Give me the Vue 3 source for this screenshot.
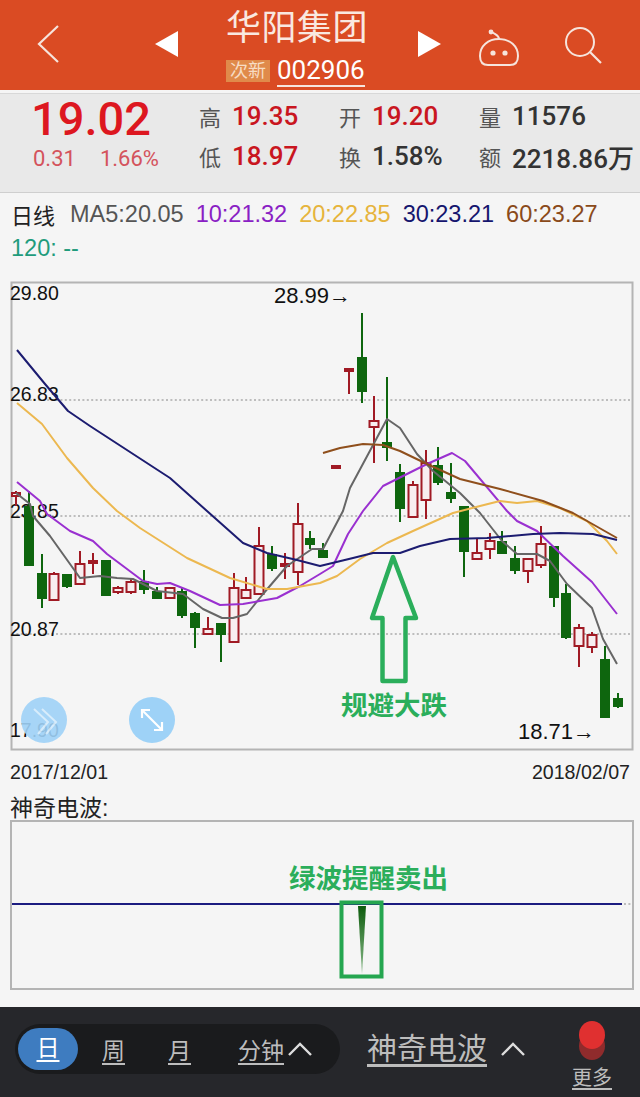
<script setup>
const quotes = [
  { label: "高", value: "19.35", up: true },
  { label: "开", value: "19.20", up: true },
  { label: "量", value: "11576", up: false },
  { label: "低", value: "18.97", up: true },
  { label: "换", value: "1.58%", up: false },
  { label: "额", value: "2218.86万", up: false },
];

const legend = [
  { text: "MA5:20.05", color: "#555" },
  { text: "10:21.32", color: "#8a1fc4" },
  { text: "20:22.85", color: "#e6b43c" },
  { text: "30:23.21", color: "#15156e" },
  { text: "60:23.27", color: "#8a4a1a" },
];

// x, wick top, wick bottom, body top, body bottom, up
const candles = [
  [16, 490, 505, 492, 495, 1],
  [29, 490, 565, 505, 565, 0],
  [42, 553, 607, 572, 598, 0],
  [54, 571, 600, 573, 599, 1],
  [67, 573, 587, 573, 586, 0],
  [80, 550, 583, 563, 583, 1],
  [93, 552, 573, 560, 562, 1],
  [106, 559, 595, 559, 595, 0],
  [118, 585, 593, 587, 591, 1],
  [131, 578, 593, 581, 591, 1],
  [144, 569, 593, 580, 589, 0],
  [157, 586, 598, 590, 598, 0],
  [170, 586, 598, 587, 597, 1],
  [182, 586, 617, 590, 615, 0],
  [195, 611, 647, 612, 627, 0],
  [208, 616, 633, 628, 633, 1],
  [221, 622, 661, 622, 634, 0],
  [234, 572, 641, 587, 641, 1],
  [246, 576, 598, 589, 597, 1],
  [259, 526, 594, 545, 593, 1],
  [272, 545, 570, 553, 568, 0],
  [285, 552, 578, 563, 565, 1],
  [298, 502, 584, 523, 571, 1],
  [310, 530, 548, 537, 544, 0],
  [323, 542, 557, 549, 557, 0],
  [336, 465, 467, 465, 467, 1],
  [349, 368, 393, 368, 370, 1],
  [362, 312, 402, 356, 391, 0],
  [374, 395, 462, 420, 426, 1],
  [387, 376, 460, 441, 447, 0],
  [400, 463, 521, 471, 508, 0],
  [413, 480, 516, 484, 516, 1],
  [426, 449, 518, 462, 499, 1],
  [438, 446, 484, 464, 482, 0],
  [451, 462, 502, 491, 498, 0],
  [464, 505, 576, 505, 551, 0],
  [477, 538, 558, 552, 558, 1],
  [490, 532, 558, 540, 548, 1],
  [502, 530, 553, 540, 553, 0],
  [515, 545, 573, 557, 570, 0],
  [528, 557, 582, 558, 570, 1],
  [541, 525, 567, 543, 564, 1],
  [554, 545, 606, 545, 597, 0],
  [566, 583, 638, 592, 637, 0],
  [579, 623, 666, 627, 645, 1],
  [592, 631, 652, 634, 646, 1],
  [605, 645, 717, 658, 717, 0],
  [618, 692, 707, 697, 706, 0],
];

const lines = [
  {
    color: "#666",
    points: "16,492 30,503 33,515 50,535 80,577 100,575 117,577 133,578 157,590 183,593 203,608 222,617 233,617 247,613 263,593 287,565 312,548 323,548 343,510 350,487 387,418 400,427 417,453 433,470 460,492 480,512 502,540 517,553 537,553 550,560 567,583 592,607 603,638 617,663",
  },
  {
    color: "#9a30d0",
    points: "17,481 40,500 47,513 70,530 93,540 107,553 143,580 157,583 170,582 190,590 220,604 243,603 277,597 300,585 320,573 333,565 348,533 363,510 383,485 427,463 452,452 465,460 507,510 517,520 537,530 563,555 592,581 617,613",
  },
  {
    color: "#ecb850",
    points: "17,402 42,423 67,457 93,487 117,510 140,527 187,557 230,577 267,588 287,588 320,582 337,575 360,558 387,542 413,530 453,512 480,505 500,500 517,502 537,500 560,507 587,520 607,540 617,553",
  },
  {
    color: "#1c1c70",
    points: "17,349 45,383 68,410 90,425 170,477 207,510 243,542 267,552 297,559 320,565 353,557 373,552 400,552 420,545 450,538 487,537 533,533 560,532 593,533 617,539",
  },
  {
    color: "#8f4f1c",
    points: "323,452 340,447 363,443 383,444 400,450 427,463 460,478 500,488 543,500 563,508 573,512 617,537",
  },
];

const priceLabels = [
  { text: "29.80", y: 299 },
  { text: "26.83", y: 400 },
  { text: "23.85", y: 517 },
  { text: "20.87", y: 635 },
];

const candleColor = (c) => (c[5] ? "#a01a24" : "#0e660e");
</script>

<template>
  <div class="page">
    <header class="topbar">
      <svg class="back" width="24" height="40" viewBox="0 0 24 40">
        <path d="M22 2 L3 20 L22 38" fill="none" stroke="#f6e4dc" stroke-width="2.2" />
      </svg>
      <svg class="prev" width="24" height="26" viewBox="0 0 24 26">
        <path d="M23 0 V26 L0 13 Z" fill="#fff" />
      </svg>
      <div class="stock">
        <div class="stock-name">华阳集团</div>
        <div class="stock-sub">
          <span class="stock-tag">次新</span>
          <span class="stock-code">002906</span>
        </div>
      </div>
      <svg class="next" width="24" height="26" viewBox="0 0 24 26">
        <path d="M1 0 V26 L24 13 Z" fill="#fff" />
      </svg>
      <svg class="robot" width="42" height="38" viewBox="0 0 42 38">
        <path d="M21 10 C10 10 2 17 2 27 C2 33 5 36 10 36 H32 C37 36 40 33 40 27 C40 17 32 10 21 10 Z" fill="none" stroke="#f6e4dc" stroke-width="2" />
        <path d="M21 10 C21 6 18 6 14 3" fill="none" stroke="#f6e4dc" stroke-width="2" />
        <circle cx="13" cy="3" r="2.4" fill="#f6e4dc" />
        <circle cx="15" cy="24" r="2.6" fill="#f6e4dc" />
        <circle cx="27" cy="24" r="2.6" fill="#f6e4dc" />
      </svg>
      <svg class="search" width="38" height="38" viewBox="0 0 38 38">
        <circle cx="16" cy="16" r="14" fill="none" stroke="#f6e4dc" stroke-width="2" />
        <path d="M26 26 L37 37" stroke="#f6e4dc" stroke-width="2.2" />
      </svg>
    </header>

    <section class="quote">
      <div class="price-block">
        <div class="price">19.02</div>
        <div class="change"><span>0.31</span><span>1.66%</span></div>
      </div>
      <div class="quote-grid">
        <div v-for="q in quotes" :key="q.label" class="quote-cell">
          <span class="quote-label">{{ q.label }}</span>
          <span class="quote-value" :class="{ up: q.up }">{{ q.value }}</span>
        </div>
      </div>
    </section>

    <section class="legend">
      <div class="legend-row">
        <span class="legend-title">日线</span>
        <span v-for="l in legend" :key="l.text" class="legend-item" :style="{ color: l.color }">{{ l.text }}</span>
      </div>
      <div class="legend-extra">120: --</div>
    </section>

    <svg class="chart" width="640" height="490" viewBox="0 270 640 490">
      <rect x="11.5" y="281.5" width="621" height="467" fill="none" stroke="#b4b4b4" stroke-width="2" />
      <g stroke="#aaa" stroke-width="1.5" stroke-dasharray="2 2.4">
        <line x1="12" y1="399" x2="632" y2="399" />
        <line x1="12" y1="515" x2="632" y2="515" />
        <line x1="12" y1="633" x2="632" y2="633" />
      </g>
      <g class="axis-text">
        <text v-for="p in priceLabels" :key="p.text" x="10" :y="p.y">{{ p.text }}</text>
        <text x="10" y="736">17.90</text>
        <text class="mark" x="274" y="302">28.99→</text>
        <text class="mark" x="518" y="738">18.71→</text>
      </g>
      <g v-for="c in candles" :key="c[0]">
        <line :x1="c[0]" :x2="c[0]" :y1="c[1]" :y2="c[2]" :stroke="candleColor(c)" stroke-width="2" />
        <rect
          v-if="c[5]"
          :x="c[4] - c[3] < 4 ? c[0] - 4 : c[0] - 4.5"
          :y="c[3]"
          :width="c[4] - c[3] < 4 ? 8 : 9"
          :height="c[4] - c[3]"
          fill="#f8eef0"
          :stroke="candleColor(c)"
          stroke-width="2"
        />
        <rect v-else :x="c[0] - 5" :y="c[3]" width="10" :height="c[4] - c[3]" :fill="candleColor(c)" />
      </g>
      <polyline v-for="l in lines" :key="l.color" :points="l.points" fill="none" :stroke="l.color" stroke-width="2" stroke-linejoin="round" />
      <path d="M393 556 L372 617 H382.5 V680 H405.5 V617 H416 Z" fill="none" stroke="#2bae5b" stroke-width="4.5" stroke-linejoin="round" />
      <text class="note" x="341" y="714">规避大跌</text>
      <circle cx="44" cy="719" r="23" fill="#9ed2f7" fill-opacity="0.9" />
      <path d="M34 708 L48 721 L38 733 M42 708 L56 721 L46 733" fill="none" stroke="#fff" stroke-opacity="0.55" stroke-width="2" />
      <circle cx="152" cy="719" r="23" fill="#9ed2f7" />
      <g fill="none" stroke="#fff" stroke-width="2.2">
        <path d="M142 709 L162 729" />
        <path d="M142 717 V709 H150" />
        <path d="M162 721 V729 H154" />
      </g>
    </svg>

    <div class="dates">
      <span>2017/12/01</span>
      <span>2018/02/07</span>
    </div>

    <div class="wave-title">神奇电波:</div>

    <svg class="wave" width="640" height="172" viewBox="0 824 640 172">
      <rect x="11" y="825" width="622" height="168" fill="none" stroke="#b4b4b4" stroke-width="2" />
      <line x1="12" y1="908" x2="622" y2="908" stroke="#1c1c80" stroke-width="2" />
      <line x1="624" y1="908" x2="632" y2="908" stroke="#aaa" stroke-width="1.5" stroke-dasharray="2 2.4" />
      <defs>
        <linearGradient id="spike" x1="0" y1="0" x2="0" y2="1">
          <stop offset="0" stop-color="#0b5a0b" />
          <stop offset="1" stop-color="#3a8a3a" stop-opacity="0.6" />
        </linearGradient>
      </defs>
      <path d="M358 910 H366 L362 978 Z" fill="url(#spike)" />
      <rect x="341.5" y="906.5" width="40" height="74" fill="none" stroke="#25a650" stroke-width="4" />
      <text class="note wave-note" x="289" y="892">绿波提醒卖出</text>
    </svg>

    <footer class="bottombar">
      <div class="periods">
        <span class="period active">日</span>
        <span class="period week">周</span>
        <span class="period month">月</span>
        <span class="period minute">分钟</span>
        <svg class="caret" width="24" height="14" viewBox="0 0 24 14">
          <path d="M1 13 L12 2 L23 13" fill="none" stroke="#ddd" stroke-width="2.4" />
        </svg>
      </div>
      <span class="indicator">神奇电波</span>
      <svg class="caret-large" width="24" height="14" viewBox="0 0 24 14">
        <path d="M1 13 L12 2 L23 13" fill="none" stroke="#ddd" stroke-width="2.4" />
      </svg>
      <div class="more">
        <div class="dot"></div>
        <span class="more-text">更多</span>
      </div>
      <div class="pager">
        <span class="pager-item"></span>
        <span class="pager-item current"></span>
      </div>
    </footer>
  </div>
</template>

<style>
html,
body {
  margin: 0;
  background: #f5f5f5;
}
</style>

<style scoped>
.page {
  width: 640px;
  height: 1097px;
  overflow: hidden;
  display: flex;
  flex-direction: column;
  background: #f5f5f5;
  font-family: "Roboto", "Noto Sans CJK SC", sans-serif;
}
.topbar {
  height: 90px;
  flex-shrink: 0;
  display: flex;
  align-items: center;
  padding-left: 36px;
  box-sizing: border-box;
  background: #da4b23;
}
.back {
  margin-right: 95px;
  margin-top: -2px;
}
.prev {
  margin-top: -2px;
}
.stock {
  width: 142px;
  margin-left: 47px;
  color: #f9e8e0;
}
.stock-name {
  font-size: 35px;
  line-height: 50px;
  letter-spacing: 0.5px;
  white-space: nowrap;
}
.stock-sub {
  display: flex;
  align-items: center;
  gap: 7px;
  height: 30px;
  margin-top: 2px;
}
.stock-tag {
  width: 44px;
  height: 22px;
  line-height: 22px;
  text-align: center;
  font-size: 18px;
  color: #f7dcc4;
  background: #e08a4a;
}
.stock-code {
  font-size: 26px;
  line-height: 30px;
  color: #fff;
  border-bottom: 2px solid #f6e4dc;
}
.next {
  margin-left: 49px;
  margin-top: -2px;
}
.robot {
  margin-left: 37px;
  margin-top: 6px;
}
.search {
  margin-left: 44px;
}
.quote {
  height: 100px;
  flex-shrink: 0;
  box-sizing: border-box;
  margin-top: 3px;
  display: flex;
  background: #e9e9e9;
  border-top: 1px solid #d8d8d8;
  border-bottom: 1px solid #cfcfcf;
  padding-left: 31px;
}
.price-block {
  width: 168px;
  flex-shrink: 0;
}
.price {
  font-size: 47px;
  font-weight: 500;
  line-height: 50px;
  margin-top: 0;
  color: #dd1720;
}
.change {
  display: flex;
  gap: 24px;
  margin-top: 1px;
  padding-left: 2px;
  font-size: 22px;
  line-height: 28px;
  color: #d4535c;
}
.quote-grid {
  display: grid;
  grid-template-columns: 140px 140px 1fr;
  grid-auto-rows: 40px;
  padding-top: 2px;
}
.quote-cell {
  display: flex;
  align-items: center;
  gap: 11px;
  white-space: nowrap;
}
.quote-label {
  font-size: 22px;
  color: #555;
}
.quote-value {
  font-size: 26px;
  font-weight: 500;
  color: #333;
}
.quote-value.up {
  color: #c9161f;
}
.legend {
  height: 80px;
  flex-shrink: 0;
  box-sizing: border-box;
  padding: 4px 0 0 11px;
  font-family: "Liberation Sans", "Noto Sans CJK SC", sans-serif;
  font-size: 23.5px;
}
.legend-row {
  display: flex;
  align-items: center;
  height: 34px;
  white-space: nowrap;
}
.legend-title {
  font-size: 22px;
  color: #222;
  margin-right: 13px;
  width: 46px;
  font-family: "Noto Sans CJK SC", sans-serif;
}
.legend-item {
  margin-right: 12px;
}
.legend-extra {
  line-height: 34px;
  color: #1f9c7c;
}
.chart {
  display: block;
  flex-shrink: 0;
  margin-top: -2px;
}
.axis-text text {
  font-family: "Liberation Sans", sans-serif;
  font-size: 19.5px;
  fill: #111;
}
.axis-text .mark {
  font-size: 22px;
}
.note {
  font-family: "Noto Sans CJK SC", sans-serif;
  font-size: 26.5px;
  font-weight: 700;
  fill: #2bae5b;
}
.wave-note {
  font-size: 26.5px;
}
.dates {
  height: 24px;
  margin-top: -1px;
  flex-shrink: 0;
  display: flex;
  justify-content: space-between;
  padding: 0 10px;
  font-family: "Liberation Sans", sans-serif;
  font-size: 19.6px;
  line-height: 24px;
  color: #222;
}
.wave-title {
  height: 36px;
  flex-shrink: 0;
  box-sizing: border-box;
  padding: 11px 0 0 10px;
  font-family: "Liberation Sans", "Noto Sans CJK SC", sans-serif;
  font-size: 23px;
  line-height: 26px;
  color: #222;
}
.wave {
  display: block;
  flex-shrink: 0;
}
.bottombar {
  position: relative;
  flex: 1;
  margin-top: 15px;
  display: flex;
  align-items: center;
  padding: 0 0 14px 15px;
  background: #26272b;
  color: #bdbdbd;
}
.periods {
  width: 325px;
  height: 50px;
  flex-shrink: 0;
  box-sizing: border-box;
  padding-left: 3px;
  display: flex;
  align-items: center;
  border-radius: 25px;
  background: #1a1b1d;
  font-size: 23px;
}
.period {
  text-decoration: underline;
  text-underline-offset: 4px;
}
.period.active {
  width: 60px;
  height: 42px;
  line-height: 42px;
  text-align: center;
  border-radius: 21px;
  background: #3e7cc0;
  color: #fff;
}
.week {
  margin-left: 24px;
}
.month {
  margin-left: 43px;
}
.minute {
  margin-left: 47px;
}
.caret {
  margin-left: 4px;
}
.indicator {
  margin-left: 27px;
  font-size: 30px;
  line-height: 40px;
  text-decoration: underline;
  text-underline-offset: 5px;
  white-space: nowrap;
}
.caret-large {
  margin-left: 14px;
}
.more {
  margin-left: 48px;
  width: 38px;
  display: flex;
  flex-direction: column;
  align-items: center;
  margin-top: 14px;
}
.dot {
  width: 26px;
  height: 28px;
  border-radius: 50%;
  background: #e03030;
  box-shadow: 0 11px 0 #8f2b2c;
  margin-bottom: 17px;
}
.more-text {
  font-size: 20px;
  line-height: 24px;
  text-decoration: underline;
  text-underline-offset: 3px;
  white-space: nowrap;
}
.pager {
  position: absolute;
  left: 300px;
  bottom: 0;
  display: flex;
  gap: 6px;
}
.pager-item {
  width: 16px;
  height: 3px;
  background: #777;
}
.pager-item.current {
  background: #fff;
}
</style>
